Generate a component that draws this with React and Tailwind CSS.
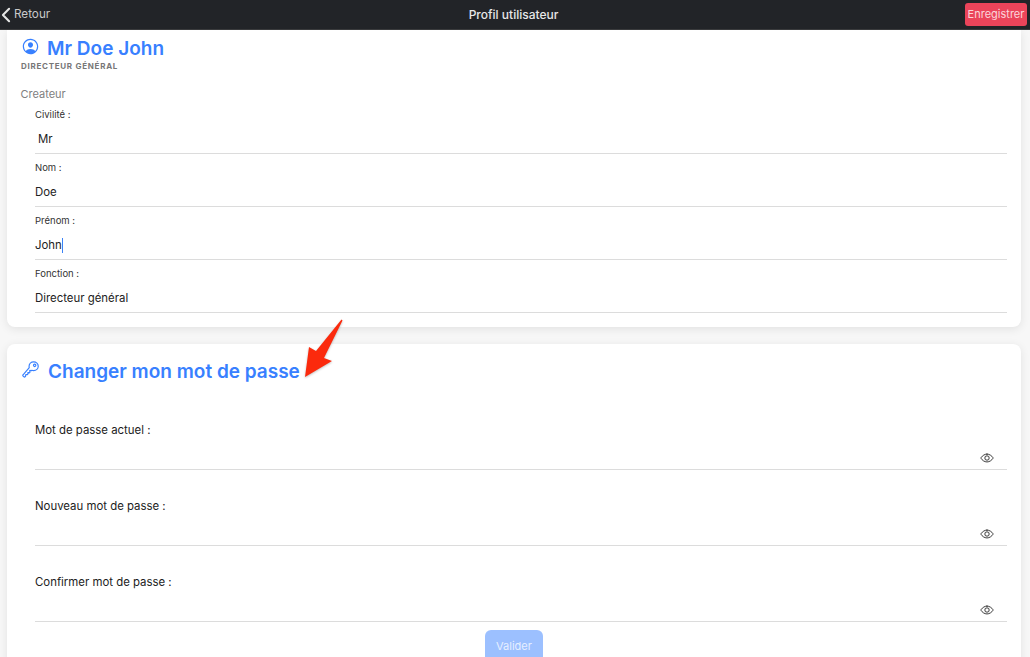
import { IoChevronBack, IoPersonCircleOutline, IoKeyOutline, IoEyeOutline } from "react-icons/io5";

function Field({ label, value, indent, caret }) {
  return (
    <div className="h-[53px] ml-[14px] flex flex-col border-b border-[#dcdcdc]">
      <div className="h-[21px] flex items-end text-[9.5px] leading-[14px] text-[#333]">{label}</div>
      <div className={`flex-1 flex items-center pt-[4px] text-[11.4px] text-[#222] ${indent ? "pl-[3px]" : ""}`}>
        {value}
        {caret && <span className="w-px h-[15px] bg-[#3b82f6]" />}
      </div>
    </div>
  );
}

function PasswordField({ label }) {
  return (
    <div className="h-[76px] ml-[14px] flex flex-col border-b border-[#dcdcdc]">
      <div className="text-[11.4px] leading-[16px] text-[#222] mt-auto mb-[11px]">{label}</div>
      <div className="h-[20px] flex justify-end items-start pt-[1.5px] pr-[13px]">
        <IoEyeOutline size={14} className="text-[#222]" />
      </div>
    </div>
  );
}

export default function App() {
  return (
    <div className="relative w-[1030px] h-[657px] overflow-hidden bg-[#f7f7f7] font-['Inter','Liberation_Sans',sans-serif]">
      {/* Toolbar */}
      <header className="relative h-[30px] bg-[#222428] border-b border-[#3a3b3d] flex items-center justify-between">
        <button className="relative z-10 flex items-center text-[11.7px] text-[#c9c9ca]">
          <IoChevronBack size={22} className="text-[#e5e5e5] -ml-[5px] -mr-[3px]" />
          Retour
        </button>
        <div className="absolute inset-x-0 pr-[3px] text-center text-[12px] font-medium text-[#e8e8e8]">Profil utilisateur</div>
        <button className="relative h-[23px] w-[62px] mr-[3px] rounded-[3px] bg-[#eb445a] text-[11px] text-[#fbd5da]">
          Enregistrer
        </button>
      </header>

      <main className="pl-[7px] pr-[9px]">
        {/* Identity card */}
        <section className="h-[297px] bg-white rounded-b-lg shadow-[0_2px_10px_rgba(0,0,0,0.09)] px-[14px]">
          <div className="h-[31px] flex items-center gap-[7px] pt-[8px]">
            <IoPersonCircleOutline size={19} className="text-[#3880ff] -mt-[7px]" />
            <h1 className="text-[19px] font-semibold text-[#3880ff]">Mr Doe John</h1>
          </div>
          <div className="text-[8px] leading-[10px] font-bold tracking-[0.09em] text-[#777]">DIRECTEUR GÉNÉRAL</div>
          <div className="text-[11px] leading-[16px] mt-[15px] -ml-[0.5px] text-[#808080]">Createur</div>
          <div className="-mt-[1px]">
            <Field label="Civilité :" value="Mr" indent />
            <Field label="Nom :" value="Doe" />
            <Field label="Prénom :" value="John" caret />
            <Field label="Fonction :" value="Directeur général" />
          </div>
        </section>

        {/* Password card */}
        <section className="h-[340px] mt-[17px] bg-white rounded-lg shadow-[0_2px_10px_rgba(0,0,0,0.09)] px-[14px]">
          <div className="h-[48px] flex items-center gap-2 pt-[8px]">
            <IoKeyOutline size={19} className="text-[#3880ff] -mt-[6px]" />
            <h2 className="text-[19px] font-semibold text-[#3880ff]">Changer mon mot de passe</h2>
          </div>
          <div className="mt-[2px]">
            <PasswordField label="Mot de passe actuel :" />
            <PasswordField label="Nouveau mot de passe :" />
            <PasswordField label="Confirmer mot de passe :" />
          </div>
          <div className="flex justify-center pt-[8px]">
            <button className="h-[32px] w-[58px] rounded-md bg-[#9cc0ff] text-[11px] text-[#e6efff]">Valider</button>
          </div>
        </section>
      </main>

      {/* Annotation arrow */}
      <svg className="absolute left-[300px] top-[316px] drop-shadow-[0_1px_1px_rgba(0,0,0,0.25)]" width="50" height="66" viewBox="0 0 50 66">
        <path d="M41.5 3.5 L16 35 L9 31 L5 61 L32 45 L24 42 L42.5 4.5 Z" fill="#fb2a0d" strokeLinejoin="round" />
      </svg>
    </div>
  );
}
